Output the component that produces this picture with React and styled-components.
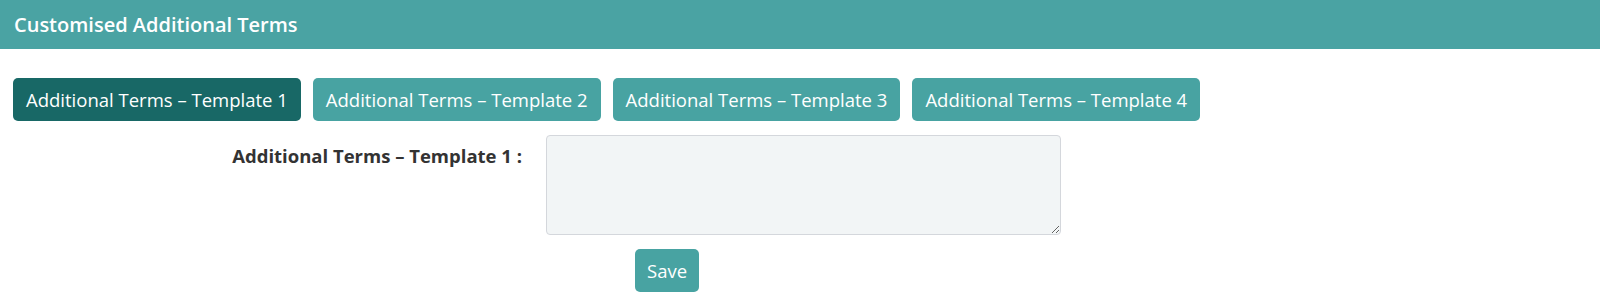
import React, { useState } from 'react';
import styled, { createGlobalStyle } from 'styled-components';

const GlobalStyle = createGlobalStyle`
body {
	margin: 0;
	background: #ffffff;
	font-family: "Open Sans", "Liberation Sans", sans-serif;
	color: #333333;
}
`;

const Panel = styled.div`
width: 1600px;
`;

const Header = styled.div`
height: 49px;
background-color: #4aa3a3;
color: #ffffff;
display: flex;
align-items: center;
padding-left: 14px;
font-size: 20px;
font-weight: 600;
box-sizing: border-box;
`;

const Body = styled.div`
padding: 29px 0 0 13px;
`;

const Tabs = styled.div`
display: flex;
gap: 12px;
`;

const Tab = styled.button`
height: 43px;
padding: 0 13px;
border: none;
border-radius: 5px;
background-color: ${(p) => (p.$active ? '#186866' : '#48a3a2')};
color: #ffffff;
font-family: "Open Sans", "Liberation Sans", sans-serif;
font-size: 18.5px;
white-space: nowrap;
cursor: pointer;
`;

const FormRow = styled.div`
display: flex;
align-items: flex-start;
margin-top: 14px;
`;

const Label = styled.label`
width: 509px;
box-sizing: border-box;
text-align: right;
padding-top: 8px;
font-size: 18.5px;
font-weight: 700;
color: #333333;
white-space: nowrap;
`;

const TextArea = styled.textarea`
margin-left: 24px;
width: 515px;
height: 100px;
box-sizing: border-box;
background-color: #f2f5f6;
border: 1px solid #d4d7dc;
border-radius: 4px;
outline: none;
font-family: "Open Sans", "Liberation Sans", sans-serif;
font-size: 16px;
`;

const Actions = styled.div`
padding: 14px 0 0 622px;
`;

const SaveButton = styled.button`
height: 43px;
padding: 0 12px;
border: none;
border-radius: 5px;
background-color: #48a3a2;
color: #ffffff;
font-family: "Open Sans", "Liberation Sans", sans-serif;
font-size: 18.5px;
cursor: pointer;
`;

const templates = [1, 2, 3, 4];

const App = () => {
	const [active, setActive] = useState(1);
	const [text, setText] = useState('');

	return (
		<>
			<GlobalStyle />
			<Panel>
				<Header>Customised Additional Terms</Header>
				<Body>
					<Tabs>
						{templates.map((n) => (
							<Tab key={n} $active={n === active} onClick={() => setActive(n)}>
								Additional Terms – Template {n}
							</Tab>
						))}
					</Tabs>
					<FormRow>
						<Label>Additional Terms – Template {active} :</Label>
						<TextArea value={text} onChange={(e) => setText(e.target.value)} />
					</FormRow>
					<Actions>
						<SaveButton>Save</SaveButton>
					</Actions>
				</Body>
			</Panel>
		</>
	);
};

export default App;
